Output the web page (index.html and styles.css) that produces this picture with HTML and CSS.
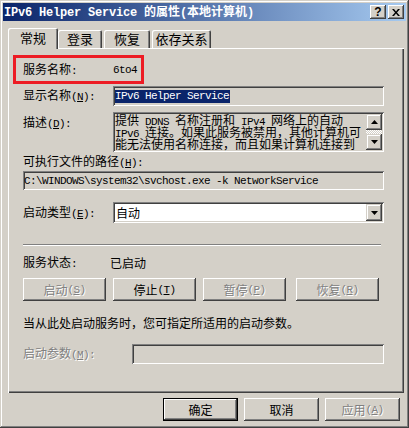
FILE: index.html
```html
<!DOCTYPE html>
<html lang="zh-CN">
<head>
<meta charset="utf-8">
<title>IPv6 Helper Service 的属性</title>
<link rel="stylesheet" href="styles.css">
</head>
<body>
<div class="window">
  <div class="titlebar">
    <span class="title"><span class="tm">IPv6 Helper Service </span>的属性<span class="tm">(</span>本地计算机<span class="tm">)</span></span>
    <div class="tbtns">
      <span class="tbtn">?</span>
      <span class="tbtn close">
        <svg width="8" height="7" viewBox="0 0 8 7"><path d="M0 0h2l2 2.5L6 0h2L5 3.5 8 7H6L4 4.5 2 7H0l3-3.5z" fill="#000"/></svg>
      </span>
    </div>
  </div>

  <div class="tabs">
    <span class="tab active">常规</span>
    <span class="tab">登录</span>
    <span class="tab">恢复</span>
    <span class="tab">依存关系</span>
  </div>

  <div class="panel">
    <div class="redbox"></div>

    <div class="row r-name">
      <span class="lbl">服务名称<span class="m">:</span></span>
      <span class="val m">6to4</span>
    </div>

    <div class="row r-disp">
      <span class="lbl">显示名称<span class="m">(<u>N</u>):</span></span>
      <div class="field ro"><span class="sel m">IPv6 Helper Service</span></div>
    </div>

    <div class="row r-desc">
      <span class="lbl">描述<span class="m">(<u>D</u>):</span></span>
      <div class="field ro desc">
        <div class="desc-text">
          <div class="dl">提供<span class="m"> DDNS </span>名称注册和<span class="m"> IPv4 </span>网络上的自动</div>
          <div class="dl"><span class="m">IPv6 </span>连接。如果此服务被禁用，其他计算机可</div>
          <div class="dl">能无法使用名称连接，而且如果计算机连接到</div>
        </div>
        <div class="vscroll">
          <span class="sbtn"><svg width="7" height="4" viewBox="0 0 7 4"><path d="M3.5 0L7 4H0z" fill="#000"/></svg></span>
          <span class="track"></span>
          <span class="sbtn"><svg width="7" height="4" viewBox="0 0 7 4"><path d="M0 0h7L3.5 4z" fill="#000"/></svg></span>
        </div>
      </div>
    </div>

    <div class="row r-plabel">
      <span>可执行文件的路径<span class="m">(<u>H</u>):</span></span>
    </div>
    <div class="row r-path">
      <div class="field ro path"><span class="m">C:\WINDOWS\system32\svchost.exe -k NetworkService</span></div>
    </div>

    <div class="row r-type">
      <span class="lbl">启动类型<span class="m">(<u>E</u>):</span></span>
      <div class="field combo">
        <span class="combo-text">自动</span>
        <span class="sbtn dd"><svg width="7" height="4" viewBox="0 0 7 4"><path d="M0 0h7L3.5 4z" fill="#000"/></svg></span>
      </div>
    </div>

    <div class="sep"></div>

    <div class="row r-status">
      <span class="lbl">服务状态<span class="m">:</span></span>
      <span class="val2">已启动</span>
    </div>

    <div class="row r-btns">
      <span class="btn dis">启动<span class="m">(<u>S</u>)</span></span>
      <span class="btn">停止<span class="m">(<u>T</u>)</span></span>
      <span class="btn dis">暂停<span class="m">(<u>P</u>)</span></span>
      <span class="btn dis last">恢复<span class="m">(<u>R</u>)</span></span>
    </div>

    <div class="row r-hint">当从此处启动服务时，您可指定所适用的启动参数。</div>

    <div class="row r-param">
      <span class="lbl2 dis-text">启动参数<span class="m">(<u>M</u>):</span></span>
      <div class="field ro param"></div>
    </div>
  </div>

  <div class="footer">
    <span class="btn fbtn default">确定</span>
    <span class="btn fbtn">取消</span>
    <span class="btn fbtn dis">应用<span class="m">(<u>A</u>)</span></span>
  </div>
</div>
</body>
</html>
```

FILE: styles.css
```css
* { box-sizing: border-box; }

html, body {
  margin: 0;
  padding: 0;
  background: #d4d0c8;
}

body {
  font: 12px/14px "Noto Sans CJK SC", "Noto Sans", sans-serif;
  color: #000;
}

.m {
  font-family: "Liberation Mono", "Noto Sans CJK SC", monospace;
  font-size: 11px;
  letter-spacing: -0.6px;
}

u { text-decoration: underline; text-underline-offset: 1px; }

.window {
  width: 409px;
  height: 428px;
  background: #d4d0c8;
  padding: 3px 3px 0 3px;
  box-shadow: inset -1px -1px #404040, inset 1px 1px #d4d0c8, inset -2px -2px #808080, inset 2px 2px #fff;
  display: flex;
  flex-direction: column;
}

.titlebar {
  height: 18px;
  background: linear-gradient(to right, #0a246a, #a6caf0);
  display: flex;
  align-items: center;
  justify-content: space-between;
  padding: 0 2px 0 1px;
  flex: none;
}

.title {
  color: #fff;
  font-weight: bold;
  font-size: 12px;
  white-space: nowrap;
}

.tm {
  font-family: "Liberation Mono", monospace;
  font-size: 12px;
  letter-spacing: -0.2px;
  font-weight: bold;
}

.tbtns { display: flex; gap: 2px; }

.tbtn {
  width: 16px;
  height: 14px;
  background: #d4d0c8;
  box-shadow: inset -1px -1px #404040, inset 1px 1px #fff, inset -2px -2px #808080;
  display: flex;
  align-items: center;
  justify-content: center;
  font: bold 12px/14px "Liberation Sans", sans-serif;
}

.tabs {
  display: flex;
  align-items: flex-end;
  height: 27px;
  padding-left: 7px;
  flex: none;
  position: relative;
  z-index: 1;
}

.tab {
  height: 18px;
  padding: 0;
  display: flex;
  align-items: center;
  justify-content: center;
  font-size: 13px;
  white-space: nowrap;
  box-shadow: inset 1px 1px #fff, inset -1px 0 #404040, inset -2px 0 #808080;
  border-radius: 2px 2px 0 0;
  margin-right: 2px;
  width: 44px;
}

.tab:nth-child(3) { width: 46px; }
.tab:nth-child(4) { width: 59px; }

.tab.active {
  width: 50px;
  height: 21px;
  margin: 0 0 -1px -2px;
  background: #d4d0c8;
  padding-bottom: 1px;
}

.panel {
  position: relative;
  margin: 0 2px 0 5px;
  height: 345px;
  box-shadow: inset 1px 1px #fff, inset -1px -1px #404040, inset -2px -2px #808080;
  padding: 0 20px 0 15px;
  display: flex;
  flex-direction: column;
  flex: none;
}

.redbox {
  position: absolute;
  left: 5px;
  top: 7px;
  width: 131px;
  height: 29px;
  border: 3px solid #ed1c24;
}

.row {
  display: flex;
  align-items: center;
  flex: none;
}

.lbl { width: 90px; flex: none; }

.r-name { height: 20px; margin-top: 12px; }
.r-disp { height: 20px; margin-top: 6px; }
.r-desc { height: 40px; margin-top: 6px; align-items: flex-start; }
.r-desc .lbl { padding-top: 3px; }
.r-plabel { height: 14px; margin-top: 3px; }
.r-path { height: 19px; margin-top: 2px; }
.r-type { height: 21px; margin-top: 12px; }
.sep {
  height: 2px;
  margin-top: 21px;
  margin-right: 3px;
  border-top: 1px solid #808080;
  border-bottom: 1px solid #fff;
  flex: none;
}
.r-status { height: 14px; margin-top: 10px; }
.val2 { margin-left: -3px; }
.r-btns { height: 23px; margin-top: 8px; gap: 7px; }
.r-hint { height: 14px; margin-top: 15px; }
.r-param { height: 20px; margin-top: 14px; }
.lbl2 { width: 109px; flex: none; }

.field {
  flex: 1;
  height: 100%;
  box-shadow: inset 1px 1px #808080, inset -1px -1px #fff, inset 2px 2px #404040, inset -2px -2px #d4d0c8;
  display: flex;
  align-items: center;
  padding: 0 2px;
  overflow: hidden;
}

.field.ro { background: #d4d0c8; }

.sel {
  background: #0a246a;
  color: #fff;
  line-height: 13px;
  padding-right: 1px;
}

.desc {
  align-items: stretch;
  padding: 2px;
  overflow: visible;
}

.desc-text {
  flex: 1;
  white-space: nowrap;
  font-size: 12px;
}

.dl {
  height: 12px;
  line-height: 12px;
}

.dl .m { line-height: 12px; }

.vscroll {
  width: 16px;
  display: flex;
  flex-direction: column;
  flex: none;
}

.track {
  flex: 1;
  background-color: #fff;
  background-image: conic-gradient(#d4d0c8 25%, #fff 0 50%, #d4d0c8 0 75%, #fff 0);
  background-size: 2px 2px;
}

.sbtn {
  width: 16px;
  height: 16px;
  background: #d4d0c8;
  box-shadow: inset -1px -1px #404040, inset 1px 1px #d4d0c8, inset -2px -2px #808080, inset 2px 2px #fff;
  display: flex;
  align-items: center;
  justify-content: center;
  flex: none;
}

.path { padding-left: 1px; }

.combo {
  background: #fff;
  padding: 2px;
}

.combo-text { flex: 1; padding-left: 1px; }

.sbtn.dd { height: 17px; }

.btn {
  width: 83px;
  height: 23px;
  background: #d4d0c8;
  box-shadow: inset -1px -1px #404040, inset 1px 1px #fff, inset -2px -2px #808080, inset 2px 2px #d4d0c8;
  display: flex;
  align-items: center;
  justify-content: center;
  flex: none;
}

.btn.last { margin-left: 3px; }

.dis, .dis-text {
  color: #808080;
  text-shadow: 1px 1px #fff;
}

.footer {
  display: flex;
  gap: 6px;
  padding-left: 160px;
  margin-top: 5px;
}

.fbtn { width: 75px; }

.btn.default {
  box-shadow: inset 0 0 0 1px #000, inset -2px -2px #404040, inset 2px 2px #fff, inset -3px -3px #808080;
}
```
